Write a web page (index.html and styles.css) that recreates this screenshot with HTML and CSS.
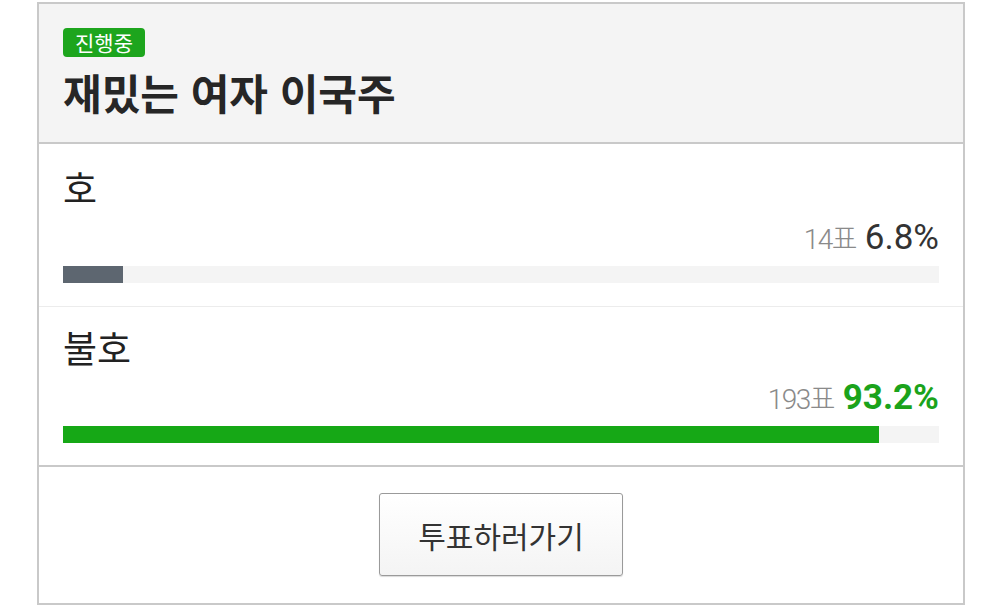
FILE: index.html
```html
<!DOCTYPE html>
<html lang="ko">
<head>
    <meta charset="utf-8">
    <title>투표</title>
    <link rel="stylesheet" href="styles.css">
</head>
<body>

<div class="poll">
    <div class="poll-header">
        <span class="badge">진행중</span>
        <h1 class="poll-title">재밌는 여자 이국주</h1>
    </div>

    <div class="options">
        <div class="option">
            <div class="option-label">호</div>
            <div class="option-result">
                <span class="votes">14표</span>
                <span class="percent">6.8%</span>
            </div>
            <div class="bar"><div class="bar-fill" style="width: 6.8%"></div></div>
        </div>
        <div class="option winner">
            <div class="option-label">불호</div>
            <div class="option-result">
                <span class="votes">193표</span>
                <span class="percent">93.2%</span>
            </div>
            <div class="bar"><div class="bar-fill" style="width: 93.2%"></div></div>
        </div>
    </div>

    <div class="poll-footer">
        <button class="vote-button" type="button">투표하러가기</button>
    </div>
</div>

</body>
</html>
```

FILE: styles.css
```css
body {
    margin: 0;
    padding: 0;
    background: #fff;
    font-family: "Noto Sans CJK KR", "Noto Sans", sans-serif;
    color: #222;
}

.poll {
    width: 924px;
    height: 599px;
    margin: 2px 0 0 37px;
    border: 2px solid #c9c9c9;
}

.poll-header {
    display: flex;
    flex-direction: column;
    align-items: flex-start;
    background-color: #f4f4f4;
    border-bottom: 2px solid #c9c9c9;
    height: 140px;
    padding: 24px 24px 0;
    box-sizing: border-box;
}
.badge {
    background-color: #1da51d;
    color: #fff;
    font-size: 21px;
    line-height: 29px;
    height: 29px;
    padding: 0 12px;
    border-radius: 4px;
}
.poll-title {
    margin: 10px 0 0;
    font-size: 42px;
    font-weight: 700;
    line-height: 50px;
    color: #262626;
}

.option {
    height: 163px;
    padding: 21px 24px 0;
    box-sizing: border-box;
    border-bottom: 1px solid #ececec;
}
.option.winner {
    height: 160px;
    padding-top: 18px;
    border-bottom: 2px solid #c9c9c9;
}
.option-label {
    font-size: 37px;
    line-height: 44px;
    color: #222;
}
.option-result {
    font-family: "Roboto", "Noto Sans CJK KR", sans-serif;
    font-size: 35px;
    text-align: right;
    line-height: 40px;
    margin-top: 9px;
}
.votes {
    font-size: 28px;
    font-weight: 300;
    color: #8a8a8a;
    letter-spacing: -1.5px;
}
.percent {
    color: #333;
}
.winner .percent {
    color: #1ba31b;
    font-weight: 700;
}
.bar {
    height: 17px;
    margin-top: 6px;
    background-color: #f4f4f4;
}
.bar-fill {
    height: 100%;
    background-color: #5d6670;
}
.winner .bar-fill {
    background-color: #16a816;
}

.poll-footer {
    display: flex;
    justify-content: center;
    padding-top: 26px;
}
.vote-button {
    width: 244px;
    height: 83px;
    font-family: "Noto Sans CJK KR", "Noto Sans", sans-serif;
    font-size: 30px;
    color: #333;
    background: linear-gradient(to bottom, #fff, #f4f4f4);
    border: 1px solid #9a9a9a;
    border-radius: 3px;
    box-shadow: 0 1px 1px rgba(0, 0, 0, 0.15);
    cursor: pointer;
}
```
